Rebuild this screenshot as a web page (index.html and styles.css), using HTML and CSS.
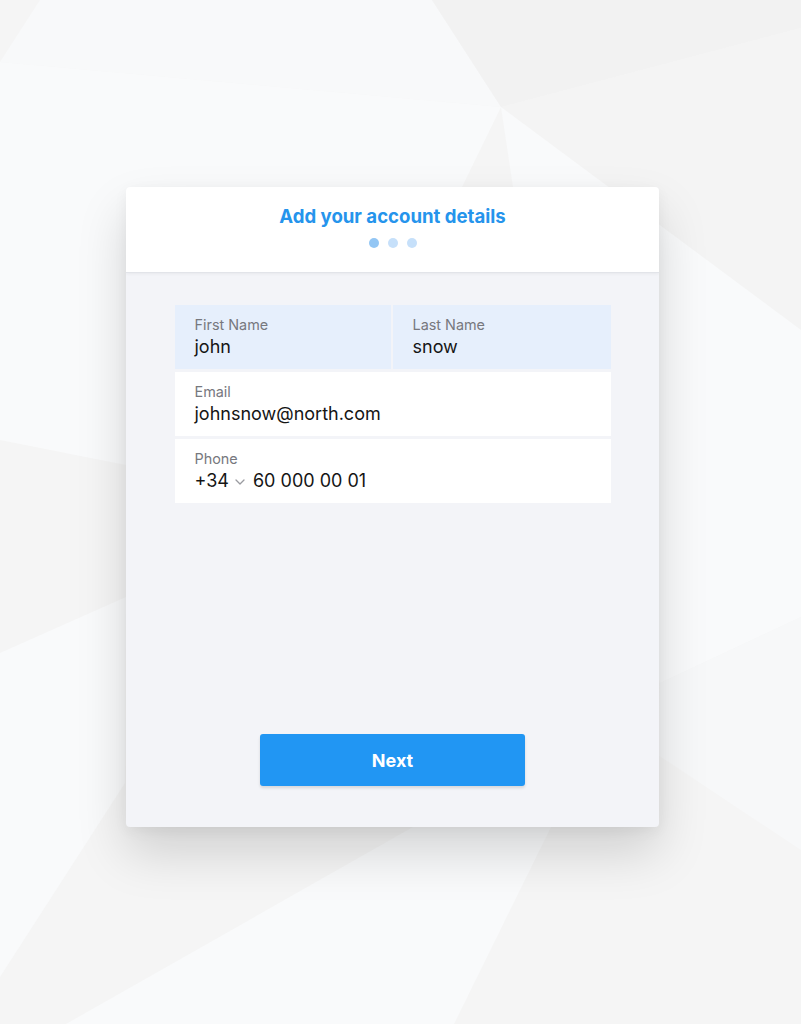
FILE: index.html
```html
<!DOCTYPE html>
<html lang="en">
<head>
<meta charset="utf-8">
<title>Add your account details</title>
<link rel="stylesheet" href="styles.css">
</head>
<body>
<svg class="bg" viewBox="0 0 801 1024" preserveAspectRatio="none" aria-hidden="true">
  <rect x="0" y="0" width="801" height="1024" fill="#f5f5f5"/>
  <polygon points="40,0 432,0 501,107 0,62" fill="#f8f9fa"/>
  <polygon points="0,62 501,107 462,187 400,420 126,465 0,440" fill="#f9fafb"/>
  <polygon points="432,0 801,0 801,28 501,107" fill="#f2f2f2"/>
  <polygon points="501,107 801,28 801,330" fill="#f4f4f4"/>
  <polygon points="501,107 801,330 801,617 660,683 560,400 513,187" fill="#f9fafb"/>
  <polygon points="660,683 801,617 801,850 658,755" fill="#f7f8f9"/>
  <polygon points="0,653 126,597 125,783 0,977" fill="#f9fafb"/>
  <polygon points="66,1024 413,827 551,827 454,1024" fill="#f9fafb"/>
</svg>

<main class="card">
  <header class="card-head">
    <h1 class="title">Add your account details</h1>
    <div class="steps">
      <span class="dot dot-active"></span>
      <span class="dot"></span>
      <span class="dot"></span>
    </div>
  </header>
  <section class="card-body">
    <form class="form">
      <div class="row row-split">
        <div class="field field-hl">
          <span class="label">First Name</span>
          <span class="value">john</span>
        </div>
        <div class="field field-hl">
          <span class="label">Last Name</span>
          <span class="value">snow</span>
        </div>
      </div>
      <div class="row">
        <div class="field">
          <span class="label">Email</span>
          <span class="value">johnsnow@north.com</span>
        </div>
      </div>
      <div class="row">
        <div class="field">
          <span class="label">Phone</span>
          <span class="value phone">
            <span class="prefix">+34</span>
            <svg class="chev" viewBox="0 0 12 8" width="12" height="8"><path d="M2 2 L6 6 L10 2" fill="none" stroke="#9a9ba0" stroke-width="1.3" stroke-linecap="round" stroke-linejoin="round"/></svg>
            <span>60 000 00 01</span>
          </span>
        </div>
      </div>
    </form>
    <button class="next" type="button">Next</button>
  </section>
</main>
</body>
</html>
```

FILE: styles.css
```css
html, body {
  margin: 0;
  padding: 0;
}
body {
  font-family: Inter, "Noto Sans", "Liberation Sans", sans-serif;
  min-height: 1024px;
  position: relative;
  background: #f5f5f5;
}
.bg {
  position: absolute;
  left: 0;
  top: 0;
  width: 801px;
  height: 1024px;
  z-index: 0;
}
.card {
  position: relative;
  z-index: 1;
  width: 533px;
  margin: 0 0 0 126px;
  top: 187px;
  height: 640px;
  display: flex;
  flex-direction: column;
  border-radius: 4px;
  background: #f3f4f8;
  box-shadow: 0 26px 50px rgba(0, 0, 0, 0.15), 0 4px 14px rgba(0, 0, 0, 0.05);
  overflow: hidden;
}
.card-head {
  background: #ffffff;
  height: 86px;
  flex: 0 0 86px;
  box-sizing: border-box;
  padding-top: 18px;
  border-bottom: 1px solid #e2e4e9;
  box-shadow: 0 1px 3px rgba(0, 0, 0, 0.05);
  display: flex;
  flex-direction: column;
  align-items: center;
}
.title {
  margin: 0;
  font-size: 18.6px;
  line-height: 22px;
  font-weight: 700;
  color: #2594ec;
  letter-spacing: 0;
}
.steps {
  display: flex;
  gap: 9px;
  margin-top: 11px;
}
.dot {
  width: 10px;
  height: 10px;
  border-radius: 50%;
  background: #c6e0fa;
}
.dot-active {
  background: #93c6f4;
}
.card-body {
  flex: 1;
  display: flex;
  flex-direction: column;
  align-items: center;
  padding: 32px 48px 41px;
}
.form {
  width: 436px;
  display: flex;
  flex-direction: column;
  gap: 3px;
}
.row {
  display: flex;
}
.row-split {
  gap: 2px;
}
.field {
  flex: 1;
  height: 64px;
  box-sizing: border-box;
  padding: 11px 20px 0;
  background: #ffffff;
  display: flex;
  flex-direction: column;
}
.field-hl {
  background: #e6effc;
}
.row-split .field:first-child {
  flex: 0 0 216px;
}
.label {
  font-size: 14.4px;
  line-height: 17px;
  color: #77787e;
}
.value {
  margin-top: 2px;
  font-size: 18px;
  line-height: 24px;
  color: #151515;
}
.phone {
  display: flex;
  align-items: center;
}
.chev {
  margin: 2px 7px 0 5px;
}
.next {
  margin-top: auto;
  width: 265px;
  height: 52px;
  border: 0;
  border-radius: 3px;
  background: #2196f3;
  color: #ffffff;
  font-family: Inter, "Noto Sans", "Liberation Sans", sans-serif;
  font-size: 18px;
  font-weight: 700;
  box-shadow: 0 2px 3px rgba(0, 0, 0, 0.12);
  cursor: pointer;
}
```
